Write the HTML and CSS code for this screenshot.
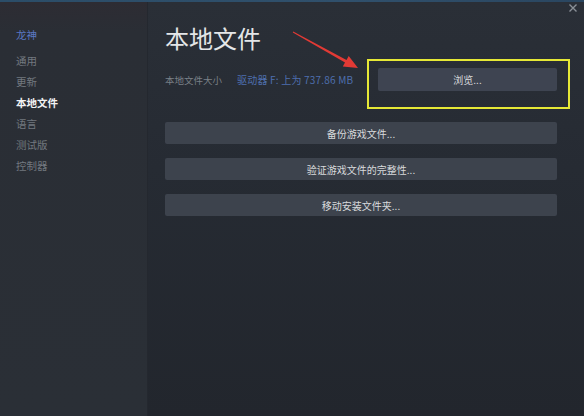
FILE: index.html
```html
<!DOCTYPE html>
<html lang="zh-CN">
<head>
<meta charset="utf-8">
<title>本地文件</title>
<link rel="stylesheet" href="styles.css">
</head>
<body>
<div class="window">
  <div class="topline"></div>
  <div class="layout">
    <nav class="sidebar">
      <div class="game">龙神</div>
      <ul class="menu">
        <li>通用</li>
        <li>更新</li>
        <li class="active">本地文件</li>
        <li>语言</li>
        <li>测试版</li>
        <li>控制器</li>
      </ul>
    </nav>
    <main class="content">
      <h1 class="title">本地文件</h1>
      <div class="size-row">
        <span class="size-label">本地文件大小</span>
        <span class="size-value">驱动器 F: 上为 737.86 MB</span>
        <button class="btn browse">浏览...</button>
      </div>
      <div class="actions">
        <button class="btn">备份游戏文件...</button>
        <button class="btn">验证游戏文件的完整性...</button>
        <button class="btn">移动安装文件夹...</button>
      </div>
    </main>
  </div>
  <svg class="close" width="10" height="10" viewBox="0 0 10 10"><path d="M1.5 1.5 L8.5 8.5 M8.5 1.5 L1.5 8.5" stroke="#8a9097" stroke-width="1.4" fill="none"/></svg>
  <div class="highlight"></div>
  <svg class="arrow" width="584" height="416" viewBox="0 0 584 416"><polygon points="293.2,31.6 346.5,59.9 348.7,56 358,68 342.8,66.5 345,62.5 292.8,32.4" fill="#e23a35"/></svg>
</div>
</body>
</html>
```
FILE: styles.css
```css
html, body {
  margin: 0;
  padding: 0;
}
body {
  width: 584px;
  height: 416px;
  overflow: hidden;
  background: #24282f;
  font-family: "Noto Sans CJK SC", "Noto Sans", sans-serif;
}
.window {
  position: relative;
  width: 584px;
  height: 416px;
  display: flex;
  flex-direction: column;
}
.topline {
  height: 2px;
  background: linear-gradient(90deg, #2b4d68, #30506c 60%, #2a4660);
  flex: none;
}
.layout {
  flex: 1;
  display: flex;
}
.sidebar {
  width: 148px;
  flex: none;
  background: linear-gradient(180deg, #2d2c33 0px, #2a2e35 30px, #2a2f36 100%);
  box-shadow: inset -1px 0 0 #24282f;
  padding: 26px 0 0 16px;
  box-sizing: border-box;
}
.game {
  font-size: 10.5px;
  line-height: 14px;
  color: #5a78c4;
  margin-bottom: 8px;
}
.menu {
  list-style: none;
  margin: 0;
  padding: 0;
}
.menu li {
  font-size: 10.5px;
  line-height: 21px;
  color: #72787f;
}
.menu li.active {
  color: #f2f3f4;
  font-weight: bold;
}
.content {
  flex: 1;
  background: linear-gradient(180deg, #2a2f37 0%, #262b33 40%, #22262d 100%);
  padding: 21px 27px 0 17px;
  box-sizing: border-box;
}
.title {
  margin: 0;
  font-size: 24px;
  line-height: 30px;
  font-weight: normal;
  color: #e4e6e8;
}
.size-row {
  display: flex;
  align-items: center;
  margin-top: 15px;
  height: 23px;
}
.size-label {
  font-size: 9.5px;
  color: #7a8087;
}
.size-value {
  margin-left: 15px;
  font-size: 10px;
  letter-spacing: 0.2px;
  color: #4e6fae;
}
.btn {
  display: block;
  border: none;
  background: #3d434d;
  color: #d8dadc;
  font-family: "Noto Sans CJK SC", "Noto Sans", sans-serif;
  font-size: 10px;
  height: 22px;
  padding: 0;
  border-radius: 2px;
  width: 100%;
}
.browse {
  margin-left: auto;
  width: 179px;
  height: 23px;
  background: #3e4451;
}
.actions {
  margin-top: 31px;
  display: flex;
  flex-direction: column;
  gap: 14px;
}
.close {
  position: absolute;
  left: 568px;
  top: 3px;
}
.highlight {
  position: absolute;
  left: 367px;
  top: 59px;
  width: 199px;
  height: 46px;
  border: 2px solid #e6e836;
}
.arrow {
  position: absolute;
  left: 0;
  top: 0;
  pointer-events: none;
}
```
